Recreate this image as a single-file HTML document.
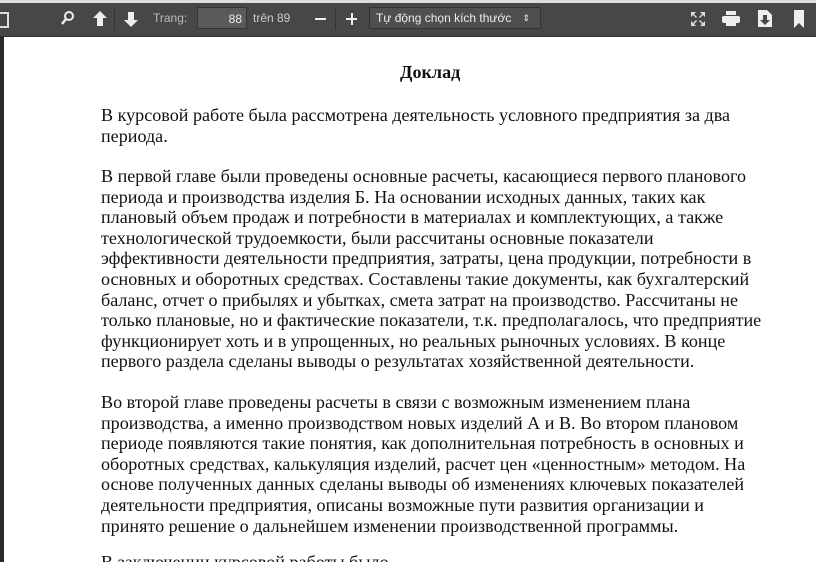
<!DOCTYPE html>
<html style="overflow:hidden"><head><meta charset="utf-8"><style>
html,body{overflow:hidden;height:562px}
body{margin:0;width:816px;background:#fff;position:relative;font-family:"Liberation Sans",sans-serif}
.tb{position:absolute;left:0;top:3px;width:816px;height:33px;background:#474747;border-bottom:1px solid #333}
.top{position:absolute;left:0;top:0;width:816px;height:3px;background:#ddd}
.ls{position:absolute;left:0;top:36px;width:4px;height:526px;background:#2a2a2a}
.t{position:absolute;color:#ddd;font-size:12px;top:12px}
.doc{position:absolute;left:101px;top:0;font-family:"Liberation Serif",serif;font-size:18.1px;color:#111;white-space:nowrap}
.doc div{position:absolute;left:0}
</style></head><body>
<div class="top"></div>
<div class="tb">
<div style="position:absolute;left:0;top:9px;width:7px;height:12px;border:2px solid #ddd;border-left:none"></div>
<svg style="position:absolute;left:60px;top:7px" width="16" height="16"><circle cx="9" cy="6" r="4" stroke="#eee" stroke-width="2" fill="none"/><line x1="6" y1="9" x2="2" y2="14" stroke="#eee" stroke-width="2.5"/></svg>
<svg style="position:absolute;left:92px;top:7px" width="16" height="18"><path d="M8 1 L15 8 L11 8 L11 16 L5 16 L5 8 L1 8Z" fill="#eee"/></svg>
<div style="position:absolute;left:114px;top:5px;width:1px;height:22px;background:#333"></div>
<svg style="position:absolute;left:123px;top:7px" width="16" height="18"><path d="M8 17 L15 10 L11 10 L11 2 L5 2 L5 10 L1 10Z" fill="#eee"/></svg>
<div class="t" style="left:153px;top:8px;color:#bbb">Trang:</div>
<div style="position:absolute;left:197px;top:4px;width:50px;height:22px;background:#5a5a5a;border:1px solid #333;border-radius:2px;color:#eee;font-size:12px;text-align:right;line-height:22px;box-sizing:border-box;padding-right:4px">88</div>
<div class="t" style="left:253px;top:8px;color:#ccc">trên 89</div>
<div style="position:absolute;left:315px;top:15px;width:11px;height:2px;background:#eee"></div>
<div style="position:absolute;left:335px;top:5px;width:1px;height:22px;background:#333"></div>
<div style="position:absolute;left:346px;top:15px;width:11px;height:2px;background:#eee"></div>
<div style="position:absolute;left:350.5px;top:10px;width:2px;height:12px;background:#eee"></div>
<div style="position:absolute;left:369px;top:4px;width:172px;height:22px;background:#4f4f4f;border:1px solid #333;border-radius:2px;box-sizing:border-box;color:#eee;font-size:12px;line-height:20px;padding-left:6px">Tự động chọn kích thước<span style="position:absolute;right:10px;font-size:9px">⇕</span></div>
<svg style="position:absolute;left:690px;top:8px" width="16" height="16" fill="#ddd"><path d="M1 1h5l-2 2 3 3-1 1-3-3-2 2zM15 1v5l-2-2-3 3-1-1 3-3-2-2zM1 15v-5l2 2 3-3 1 1-3 3 2 2zM15 15h-5l2-2-3-3 1-1 3 3 2-2z"/></svg>
<svg style="position:absolute;left:722px;top:8px" width="18" height="16" fill="#eee"><rect x="4" y="0" width="10" height="4"/><rect x="0" y="5" width="18" height="7" rx="2"/><rect x="4" y="10" width="10" height="5"/></svg>
<svg style="position:absolute;left:758px;top:7px" width="14" height="17"><path d="M0 0h9l5 5v12H0z" fill="#eee"/><path d="M5 5h4v5h3l-5 5-5-5h3z" fill="#474747"/></svg>
<svg style="position:absolute;left:794px;top:7px" width="10" height="18"><path d="M0 0h10v18l-5-5-5 5z" fill="#eee"/></svg>
</div>
<div class="ls"></div>
<div class="doc">
<div style="top:62px;left:299px;font-weight:bold">Доклад</div>
<div style="top:105px">В курсовой работе была рассмотрена деятельность условного предприятия за два</div>
<div style="top:126px">периода.</div>
<div style="top:166px">В первой главе были проведены основные расчеты, касающиеся первого планового</div>
<div style="top:186.6px">периода и производства изделия Б. На основании исходных данных, таких как</div>
<div style="top:207.2px">плановый объем продаж и потребности в материалах и комплектующих, а также</div>
<div style="top:227.8px">технологической трудоемкости, были рассчитаны основные показатели</div>
<div style="top:248.4px">эффективности деятельности предприятия, затраты, цена продукции, потребности в</div>
<div style="top:269px">основных и оборотных средствах. Составлены такие документы, как бухгалтерский</div>
<div style="top:289.6px">баланс, отчет о прибылях и убытках, смета затрат на производство. Рассчитаны не</div>
<div style="top:310.2px">только плановые, но и фактические показатели, т.к. предполагалось, что предприятие</div>
<div style="top:330.8px">функционирует хоть и в упрощенных, но реальных рыночных условиях. В конце</div>
<div style="top:351.4px">первого раздела сделаны выводы о результатах хозяйственной деятельности.</div>
<div style="top:392px">Во второй главе проведены расчеты в связи с возможным изменением плана</div>
<div style="top:412.6px">производства, а именно производством новых изделий А и В. Во втором плановом</div>
<div style="top:433.2px">периоде появляются такие понятия, как дополнительная потребность в основных и</div>
<div style="top:453.8px">оборотных средствах, калькуляция изделий, расчет цен «ценностным» методом. На</div>
<div style="top:474.4px">основе полученных данных сделаны выводы об изменениях ключевых показателей</div>
<div style="top:495px">деятельности предприятия, описаны возможные пути развития организации и</div>
<div style="top:515.6px">принято решение о дальнейшем изменении производственной программы.</div>
<div style="top:552px">В заключении курсовой работы было</div>
</div>
</body></html>
